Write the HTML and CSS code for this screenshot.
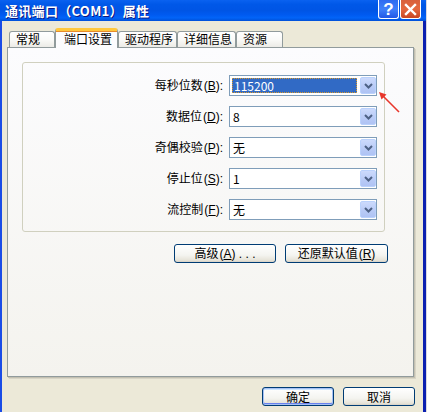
FILE: index.html
```html
<!DOCTYPE html>
<html>
<head>
<meta charset="utf-8">
<title>通讯端口（COM1）属性</title>
<link rel="stylesheet" href="styles.css">
</head>
<body>
<div class="window">
  <div class="titlebar">
    <span class="title">通讯端口（COM1）属性</span>
    <div class="caption-btns">
      <span class="cbtn help">?</span>
      <span class="cbtn close"><svg width="13" height="13" viewBox="0 0 13 13"><path d="M2 2 L11 11 M11 2 L2 11" stroke="#fff" stroke-width="2.4" stroke-linecap="square"/></svg></span>
    </div>
  </div>
  <div class="body">
    <div class="tabs">
      <div class="tab w46">常规</div>
      <div class="tab active w63">端口设置</div>
      <div class="tab w59">驱动程序</div>
      <div class="tab w59">详细信息</div>
      <div class="tab w47">资源</div>
    </div>
    <div class="panel">
      <div class="group">
        <div class="row">
          <span class="lbl">每秒位数<span class="key">(<u>B</u>):</span></span>
          <div class="combo"><span class="val"><span class="sel">115200</span></span><span class="drop"><svg width="9" height="6" viewBox="0 0 9 6"><path d="M1 1 L4.5 4.5 L8 1" fill="none" stroke="#4D6185" stroke-width="2"/></svg></span></div>
        </div>
        <div class="row">
          <span class="lbl">数据位<span class="key">(<u>D</u>):</span></span>
          <div class="combo"><span class="val">8</span><span class="drop"><svg width="9" height="6" viewBox="0 0 9 6"><path d="M1 1 L4.5 4.5 L8 1" fill="none" stroke="#4D6185" stroke-width="2"/></svg></span></div>
        </div>
        <div class="row">
          <span class="lbl">奇偶校验<span class="key">(<u>P</u>):</span></span>
          <div class="combo"><span class="val">无</span><span class="drop"><svg width="9" height="6" viewBox="0 0 9 6"><path d="M1 1 L4.5 4.5 L8 1" fill="none" stroke="#4D6185" stroke-width="2"/></svg></span></div>
        </div>
        <div class="row">
          <span class="lbl">停止位<span class="key">(<u>S</u>):</span></span>
          <div class="combo"><span class="val">1</span><span class="drop"><svg width="9" height="6" viewBox="0 0 9 6"><path d="M1 1 L4.5 4.5 L8 1" fill="none" stroke="#4D6185" stroke-width="2"/></svg></span></div>
        </div>
        <div class="row">
          <span class="lbl">流控制<span class="key">(<u>F</u>):</span></span>
          <div class="combo"><span class="val">无</span><span class="drop"><svg width="9" height="6" viewBox="0 0 9 6"><path d="M1 1 L4.5 4.5 L8 1" fill="none" stroke="#4D6185" stroke-width="2"/></svg></span></div>
        </div>
      </div>
      <div class="actions">
        <button class="btn w102">高级<span class="key">(<u>A</u>) . . .</span></button>
        <button class="btn w103">还原默认值<span class="key">(<u>R</u>)</span></button>
      </div>
    </div>
    <div class="footer">
      <button class="btn w72 default">确定</button>
      <button class="btn w72">取消</button>
    </div>
  </div>
  <svg class="annot" width="40" height="36" viewBox="0 0 40 36">
    <path d="M29 27 L13 11" stroke="#E8362B" stroke-width="1.6" fill="none"/>
    <path d="M9 7 L16.5 9.5 L11.5 14.5 Z" fill="#E8362B"/>
  </svg>
</div>
</body>
</html>
```

FILE: styles.css
```css
* { box-sizing: border-box; }
html, body { margin: 0; padding: 0; }
body {
  width: 427px;
  height: 412px;
  overflow: hidden;
  background: #D8D8E0;
  font-family: "Noto Sans CJK SC", "Liberation Sans", sans-serif;
  font-size: 12px;
  color: #000;
}
.window {
  position: relative;
  width: 426px;
  height: 412px;
  display: flex;
  flex-direction: column;
}
.titlebar {
  height: 21px;
  flex: none;
  display: flex;
  align-items: center;
  justify-content: space-between;
  padding: 0 5px 0 5px;
  background: linear-gradient(to bottom, #0A62F0 0%, #0058E8 20%, #0055E5 50%, #005AF0 70%, #0264F8 85%, #0050D8 100%);
}
.title {
  color: #fff;
  font-weight: bold;
  font-size: 13px;
  line-height: 15px;
  letter-spacing: 0.3px;
  text-shadow: 1px 1px 0 #0A1883;
}
.caption-btns {
  display: flex;
  gap: 1px;
  align-self: flex-start;
}
.cbtn {
  width: 21px;
  height: 19px;
  border: 1px solid #fff;
  border-top: none;
  border-radius: 0 0 3px 3px;
  display: flex;
  align-items: center;
  justify-content: center;
}
.help {
  background: linear-gradient(to bottom, #2E6AF0, #3F80FA 50%, #2258E6);
  color: #fff;
  font-family: "Liberation Sans", sans-serif;
  font-weight: bold;
  font-size: 17px;
  line-height: 17px;
}
.close {
  background: linear-gradient(to bottom, #D8603C, #E4683F 50%, #C84622);
}
.body {
  flex: 1;
  background: #ECE9D8;
  border-left: 2px solid #1A4CE6;
  border-right: 3px solid #0A1FB0;
  padding: 7px 9px 0 5px;
  display: flex;
  flex-direction: column;
}
.tabs {
  height: 19px;
  display: flex;
  align-items: flex-end;
  padding-left: 2px;
  flex: none;
}
.tab {
  height: 16px;
  border: 1px solid #919B9C;
  border-bottom: none;
  border-radius: 3px 3px 0 0;
  background: linear-gradient(to bottom, #FFFFFF, #FAFAF8 50%, #ECEBE6);
  line-height: 14px;
  padding-left: 6px;
  white-space: nowrap;
}
.tab.active {
  position: relative;
  z-index: 1;
  height: 20px;
  margin-bottom: -1px;
  border-top: 3px solid #FFC83C;
  background: #FCFCFE;
  padding-left: 8px;
  line-height: 15px;
  box-shadow: inset 0 1px 0 #E68B2C;
}
.w46 { width: 46px; }
.w47 { width: 47px; }
.w59 { width: 59px; }
.w63 { width: 63px; }
.w72 { width: 72px; }
.w102 { width: 102px; }
.w103 { width: 103px; }
.panel {
  height: 330px;
  flex: none;
  border: 1px solid #919B9C;
  background: linear-gradient(to bottom, #FCFCFE, #F4F3EE 100%);
  box-shadow: 1px 1px 0 #C3C0B1, 2px 2px 0 #D8D5C6;
  padding: 14px;
}
.group {
  width: 363px;
  border: 1px solid #D0D0BF;
  border-radius: 3px;
  padding: 12px 7px 11px 0;
  display: flex;
  flex-direction: column;
  gap: 10px;
}
.row {
  display: flex;
  align-items: center;
  height: 21px;
}
.lbl {
  flex: 1;
  text-align: right;
  padding-right: 6px;
  line-height: 14px;
  white-space: nowrap;
}
.key {
  font-family: "Liberation Sans", sans-serif;
  font-size: 12px;
  margin-left: 1px;
}
.key u { text-underline-offset: 1px; }
.combo {
  width: 148px;
  height: 21px;
  border: 1px solid #7F9DB9;
  background: #fff;
  display: flex;
  align-items: center;
  padding: 1px 0 1px 2px;
}
.val {
  flex: 1;
  height: 17px;
  display: flex;
  align-items: center;
  padding-left: 1px;
  margin-right: 2px;
  line-height: 15px;
}
.sel {
  width: 100%;
  height: 15px;
  margin-left: -1px;
  background: #316AC5;
  color: #fff;
  border: 1px dotted #D89A30;
  line-height: 13px;
  padding-left: 1px;
}
.drop {
  width: 16px;
  height: 17px;
  border: 1px solid #BAD1FC;
  border-radius: 2px;
  background: linear-gradient(to bottom, #CCDAFC, #B8CAF6 60%, #AFC3F4);
  display: flex;
  align-items: center;
  justify-content: center;
}
.actions {
  display: flex;
  gap: 9px;
  margin-top: 12px;
  padding-left: 152px;
}
.btn {
  height: 19px;
  border: 1px solid #003C74;
  border-radius: 3px;
  background: linear-gradient(to bottom, #FFFFFF, #F4F4F0 60%, #E6E3D8 90%, #D6D0C5);
  font-family: "Noto Sans CJK SC", "Liberation Sans", sans-serif;
  font-size: 12px;
  line-height: 15px;
  color: #000;
  padding: 0;
  white-space: nowrap;
}
.btn.default {
  box-shadow: inset 0 0 0 1px #A6C0F4, inset 0 -1px 0 1px #6982EE, inset 0 1px 0 1px #CEE7FF;
}
.footer {
  display: flex;
  justify-content: flex-end;
  gap: 9px;
  margin-top: 10px;
  margin-right: -1px;
}
.annot {
  position: absolute;
  left: 370px;
  top: 85px;
}
```
